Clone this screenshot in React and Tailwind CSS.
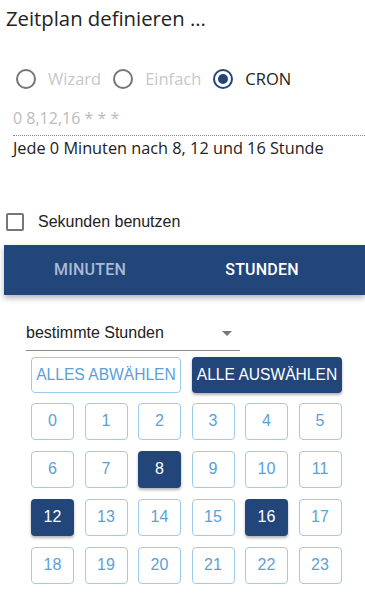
import { useState } from "react";

const BLUE = "bg-[#22457a]";

function Radio({ label, checked }) {
  return (
    <label className="flex items-center gap-[12px]">
      <span
        className={`w-[20px] h-[20px] rounded-full border-2 flex items-center justify-center ${
          checked ? "border-[#22457a]" : "border-[#767676]"
        }`}
      >
        {checked && <span className="w-[10px] h-[10px] rounded-full bg-[#22457a]" />}
      </span>
      <span className={checked ? "text-[#222]" : "text-[#c8c8c8]"}>{label}</span>
    </label>
  );
}

export default function App() {
  const [selected] = useState([8, 12, 16]);
  const hours = Array.from({ length: 24 }, (_, i) => i);

  return (
    <div className="w-[365px] h-[597px] bg-white overflow-hidden font-['Liberation_Sans',Arial,sans-serif]">
      <h1 className="pl-[6px] pt-[4px] text-[20.3px] leading-[28px] text-[#222] font-['Open_Sans',sans-serif]">
        Zeitplan definieren ...
      </h1>

      {/* mode radios */}
      <div className="flex items-center gap-[12px] pl-[16px] mt-[35px] text-[16.5px] font-['Open_Sans',sans-serif]">
        <Radio label="Wizard" />
        <Radio label="Einfach" />
        <Radio label="CRON" checked />
      </div>

      {/* cron expression */}
      <div className="ml-[13px] mt-[14px] border-b border-dotted border-[#888] pb-[5px] text-[16px] leading-[24px] text-[#bbb] font-['Open_Sans',sans-serif]">
        0 8,12,16 * * *
      </div>
      <div className="ml-[13px] text-[16.3px] leading-[24px] text-[#222] font-['Open_Sans',sans-serif]">
        Jede 0 Minuten nach 8, 12 und 16 Stunde
      </div>

      {/* seconds */}
      <label className="flex items-center gap-[14px] pl-[6px] mt-[50px] text-[16px] text-[#222]">
        <span className="w-[18px] h-[18px] border-2 border-[#767676] rounded-[2px]" />
        Sekunden benutzen
      </label>

      {/* tabs */}
      <div className={`ml-[4px] mt-[11px] h-[50px] ${BLUE} flex shadow-[0_3px_6px_rgba(0,0,0,0.3)] text-[16px] tracking-[0.2px] font-medium font-['Roboto',sans-serif]`}>
        <div className="w-[172px] flex items-center justify-center text-[#a8bbd6]">MINUTEN</div>
        <div className="w-[172px] flex items-center justify-center text-white">STUNDEN</div>
      </div>

      {/* select */}
      <div className="ml-[26px] mt-[22px] w-[214px] border-b border-[#8a8a8a] h-[34px] flex items-center justify-between pr-[8px] text-[16px] text-[#222]">
        <span>bestimmte Stunden</span>
        <span className="w-0 h-0 border-l-[5px] border-r-[5px] border-t-[5px] border-l-transparent border-r-transparent border-t-[#777]" />
      </div>

      {/* bulk buttons */}
      <div className="flex gap-[11px] ml-[31px] mt-[6px] text-[15.6px]">
        <button className="w-[150px] h-[36px] border border-[#9dcbe8] rounded-[4px] text-[#5b9fd8]">
          ALLES ABWÄHLEN
        </button>
        <button className={`w-[150px] h-[36px] rounded-[4px] ${BLUE} text-white shadow-[0_2px_3px_rgba(0,0,0,0.3)]`}>
          ALLE AUSWÄHLEN
        </button>
      </div>

      {/* hour grid */}
      <div className="grid grid-cols-[repeat(6,43px)] gap-x-[10.5px] gap-y-[11px] ml-[31px] mt-[10px] text-[16px]">
        {hours.map((h) => {
          const on = selected.includes(h);
          return (
            <div
              key={h}
              className={`h-[37px] rounded-[4px] flex items-center justify-center ${
                on
                  ? `${BLUE} text-white shadow-[0_2px_3px_rgba(0,0,0,0.3)]`
                  : "border border-[#9dcbe8] text-[#5b9fd8]"
              }`}
            >
              {h}
            </div>
          );
        })}
      </div>
    </div>
  );
}
